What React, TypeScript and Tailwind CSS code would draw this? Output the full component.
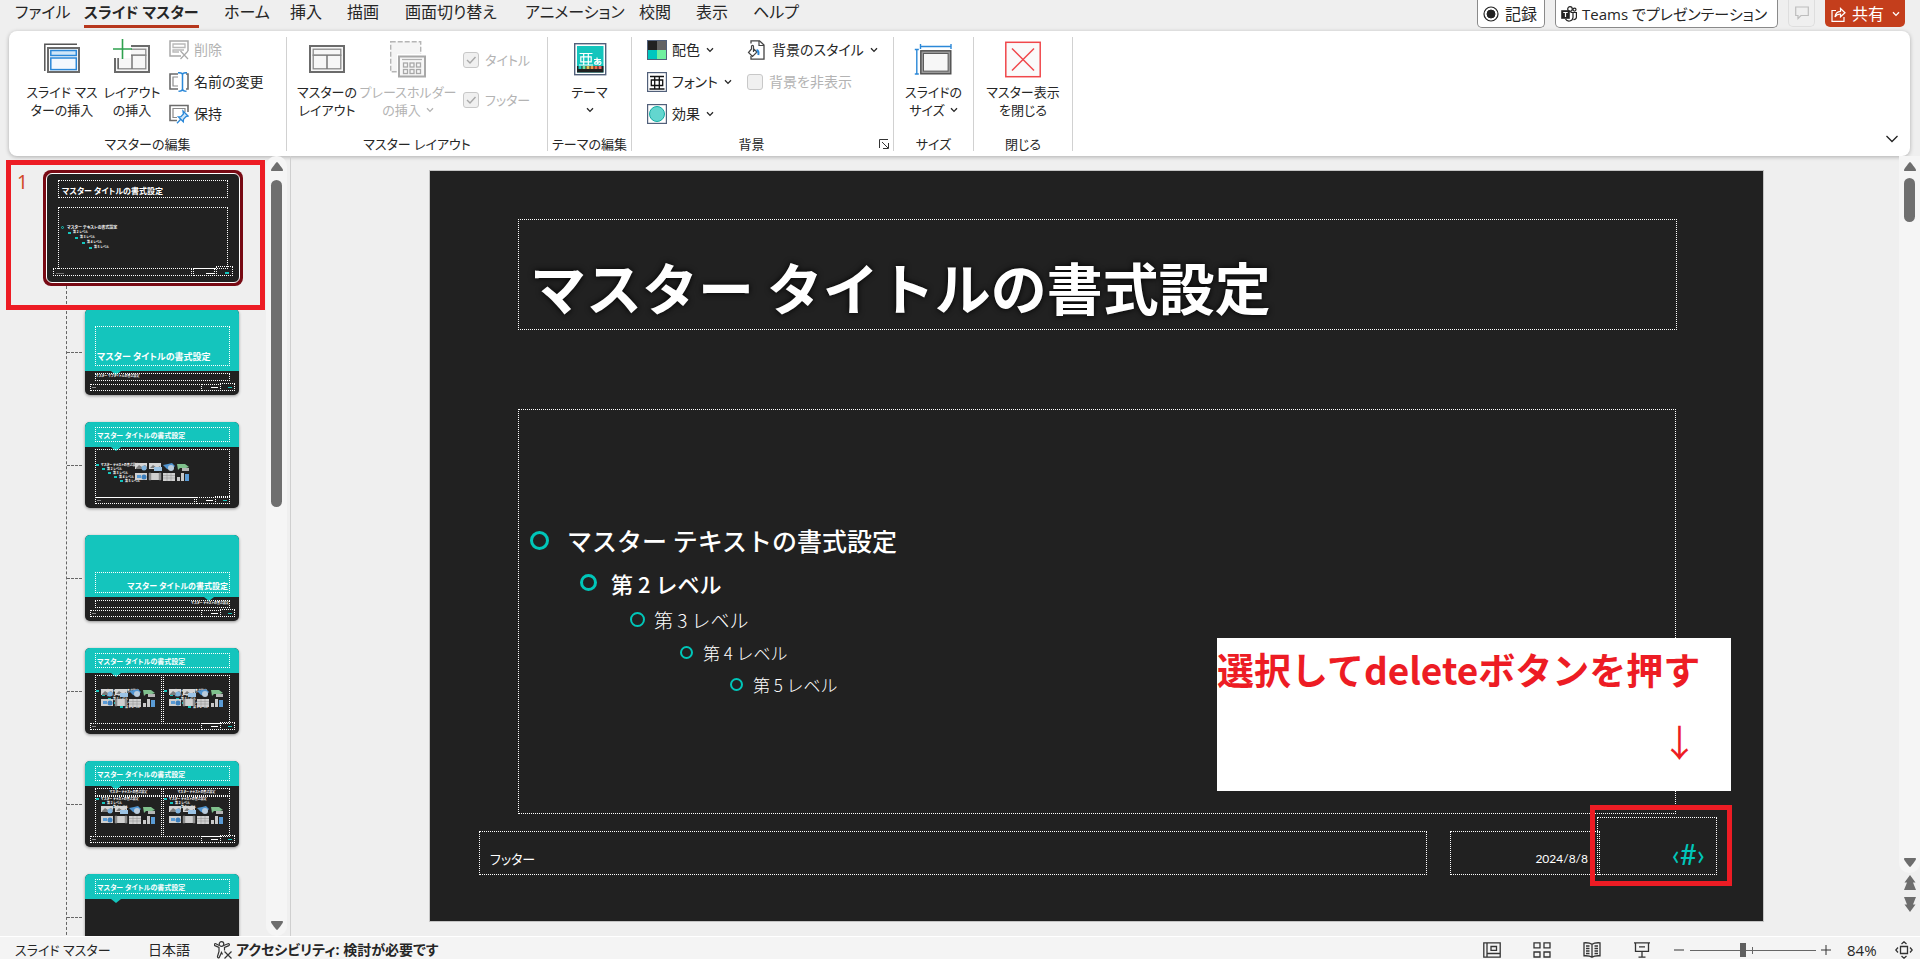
import React from "react";

type Kids = { children?: React.ReactNode };

const GREY = "#6b6b6b";
const BLUE = "#2b88d8";
const TEAL = "#14c5bd";

function Chevron({ className = "" }: { className?: string }) {
  return (
    <svg viewBox="0 0 8 6" className={"h-[6px] w-[8px] shrink-0 " + className} fill="none" stroke="currentColor" strokeWidth="1.3">
      <path d="M1 1.2 4 4.4 7 1.2" />
    </svg>
  );
}

/* ---------- Large ribbon icons (40 x 40) ---------- */

function Big({ children }: Kids) {
  return (
    <svg viewBox="0 0 40 40" className="h-10 w-10 shrink-0" fill="none">
      {children}
    </svg>
  );
}

function SlideMasterIcon() {
  return (
    <Big>
      <path d="M2.8 33V6.2H35" stroke="#555" strokeWidth="1.5" />
      <rect x="6" y="10" width="31" height="24" fill="#fafafa" stroke={GREY} strokeWidth="2" />
      <rect x="8.8" y="12.5" width="25.5" height="5" fill="#cfe6f8" stroke={BLUE} strokeWidth="1.5" />
      <rect x="8.8" y="20" width="25.5" height="11.6" fill="#f3f8fd" stroke={BLUE} strokeWidth="1.5" />
    </Big>
  );
}

function LayoutShape() {
  return (
    <>
      <rect x="3" y="8" width="34" height="26" fill="#f7f7f7" stroke={GREY} strokeWidth="2" />
      <rect x="6.2" y="11.2" width="27.6" height="6" stroke="#8a8a8a" strokeWidth="1.3" />
      <rect x="6.2" y="17.2" width="27.6" height="13.6" stroke="#8a8a8a" strokeWidth="1.3" />
      <path d="M20 17v14" stroke="#777" strokeWidth="1.5" />
    </>
  );
}

function InsertLayoutIcon() {
  return (
    <Big>
      <LayoutShape />
      <path d="M0 0h19v20H0z" fill="#fff" />
      <path d="M3 20v13M6.2 20v11" stroke={GREY} strokeWidth="1.5" />
      <path d="M10.5 1v20M1 11h19" stroke="#2fa14f" strokeWidth="1.6" />
    </Big>
  );
}

function MasterLayoutIcon() {
  return (
    <Big>
      <LayoutShape />
    </Big>
  );
}

function PlaceholderIcon() {
  return (
    <Big>
      <rect x="2.7" y="3.7" width="30" height="30" fill="#f5f5f5" stroke="#b5b5b5" strokeWidth="1.4" strokeDasharray="5 2" />
      <rect x="9" y="16" width="30" height="24" fill="#fff" />
      <rect x="11" y="18.5" width="26" height="20" fill="#f7f7f7" stroke="#a8a8a8" strokeWidth="2" />
      <path d="M14 21.5h20" stroke="#b0b0b0" strokeWidth="1.2" />
      {[15.5, 22, 28.5].map((x) => (
        <g key={x} stroke="#a8a8a8" strokeWidth="1.3">
          <rect x={x} y="25" width="4" height="4" />
          <rect x={x} y="31.5" width="4" height="4" />
        </g>
      ))}
    </Big>
  );
}

function ThemeIcon() {
  const swatches = ["#1bc8c0", "#70e8a0", "#e7c65a", "#f29a4a", "#ee6a4a", "#f0605e"];
  return (
    <Big>
      <rect x="4.7" y="5.7" width="31" height="31" fill="#fff" stroke="#51607a" strokeWidth="1.4" />
      <rect x="7" y="8" width="26.5" height="26.5" fill={TEAL} />
      <rect x="7" y="28" width="26.5" height="6.5" fill="#212121" />
      {swatches.map((c, i) => (
        <rect key={c} x={8.5 + i * 4} y="28" width="3" height="3" fill={c} />
      ))}
      <path d="M9.5 15.5h13M9 27h14M13.7 15.5V27M18.3 15.5V27M10.8 18.8h10.4v5H10.8z" stroke="#fff" strokeWidth="1.2" />
      <path d="M24 21.5h7M27 19.5c0 3 .2 5 .8 7M30 22.8c-1.2 3-5 4.5-5.3 2.5 0-2.5 6.5-3 6.3-.3-.1 1.2-1.2 1.7-2.5 1.8" stroke="#fff" strokeWidth="1.2" />
    </Big>
  );
}

function SlideSizeIcon() {
  return (
    <Big>
      <path d="M6.5 8.5H37M6.5 6v5M37 6v5M2.8 11.5V36M.8 11.5h4M.8 36h4" stroke={BLUE} strokeWidth="1.4" />
      <rect x="6.8" y="12.8" width="30" height="23" fill="#9a9a9a" stroke="#4e4e4e" strokeWidth="1.4" />
      <rect x="9.5" y="15.5" width="24.6" height="17.6" fill="#f7f7f7" stroke="#5c5c5c" />
    </Big>
  );
}

function CloseMasterIcon() {
  return (
    <Big>
      <rect x="2.8" y="4.3" width="34.4" height="34.4" fill="#fafafa" stroke="#f0474b" strokeWidth="1.5" />
      <path d="M9 10.5 31 32.5M31 10.5 9 32.5" stroke="#f0474b" strokeWidth="1.5" />
    </Big>
  );
}

/* ---------- Small ribbon icons (20 x 20) ---------- */

function Small({ children }: Kids) {
  return (
    <svg viewBox="0 0 20 20" className="h-5 w-5 shrink-0" fill="none">
      {children}
    </svg>
  );
}

function DeleteIcon() {
  return (
    <Small>
      <path d="M12 16H1V1h18v10" stroke="#a9a9a9" strokeWidth="1.5" />
      <path d="M4 4h12v3.5H4zM10 12H4v-2h11" stroke="#b9b9b9" strokeWidth="1.3" />
      <path d="m11.5 11 7.500 8M19 11l-7.500 8" stroke="#a9a9a9" strokeWidth="1.2" />
    </Small>
  );
}

function RenameIcon() {
  return (
    <Small>
      <path d="M9 2H1v15h8" stroke={GREY} strokeWidth="1.6" />
      <path d="M9 5H4v9h5" stroke="#8a8a8a" strokeWidth="1.2" />
      <path d="M17 2h2v15h-2" stroke={GREY} strokeWidth="1.6" />
      <path d="M9 .7c3 0 4.500.3 4.500 2v14c0 1.700-1.500 2.500-4 2.500M18 .7c-3 0-4.500.3-4.500 2v14c0 1.700 1.500 2.500 4 2.500" stroke={BLUE} strokeWidth="1.5" />
    </Small>
  );
}

function PreserveIcon() {
  return (
    <Small>
      <path d="M8 16.500H1v-15h18V8" stroke={GREY} strokeWidth="1.6" />
      <path d="M8 13.500H4v-9h12V8" stroke="#8a8a8a" strokeWidth="1.2" />
      <path d="m14 7 5 5-2 .6-2.500 2.600-.2 2.600-5-5 2.600-.2 2.500-2.600L14 7ZM11.500 15.500 8 19.300" fill="#cfe6f8" stroke={BLUE} strokeWidth="1.3" />
    </Small>
  );
}

function ColorsIcon() {
  return (
    <Small>
      <path d="M0 0h10v10H0z" fill="#212121" />
      <path d="M10 0h10v10H10z" fill="#636363" />
      <path d="M0 10h10v10H0z" fill="#00c6bf" />
      <path d="M10 10h10v10H10z" fill="#70ef9f" />
      <rect x=".5" y=".5" width="19" height="19" stroke="#51607a" />
    </Small>
  );
}

function FontsIcon() {
  return (
    <Small>
      <rect x=".6" y=".6" width="18.8" height="18.8" fill="#fff" stroke="#51607a" strokeWidth="1.2" />
      <path d="M3 4.500h14M2.500 17h15M7.700 4.500V17M12.300 4.500V17M4.300 8h11.400v5.500H4.300z" stroke="#111" strokeWidth="1.3" />
    </Small>
  );
}

function EffectsIcon() {
  return (
    <Small>
      <rect x=".6" y=".6" width="18.8" height="18.8" fill="#fff" stroke="#51607a" strokeWidth="1.2" />
      <circle cx="10" cy="10" r="7.5" fill="#63d6cf" stroke="#14aaa3" />
    </Small>
  );
}

function BackgroundStyleIcon() {
  return (
    <Small>
      <path d="M4 3.500V.8h8.500L17 5v14.200H4V16" fill="#fff" stroke="#444" strokeWidth="1.300" />
      <path d="M12 1v4.500h5" stroke="#444" strokeWidth="1.200" />
      <path d="M6.500 12V6.500c0-1.500-2-1.500-2 0V9L1.500 12.500l4 4 4.500-4.500-3.500-3.300" fill="#fff" stroke="#444" strokeWidth="1.200" />
      <path d="M9.500 10c2 .6 2.300 2.500 1.800 5" stroke={BLUE} strokeWidth="2" />
    </Small>
  );
}

/* ---------- Ribbon parts ---------- */

function Group({ label, className, launcher, children }: Kids & { label: string; className: string; launcher?: boolean }) {
  return (
    <section className={"flex shrink-0 flex-col border-r border-[#d1d1d1] " + className}>
      <div className="flex flex-1">{children}</div>
      <div className="flex h-[14px] items-center justify-center">
        <h2 className="flex-1 text-center text-[13px] leading-[14px] whitespace-nowrap">{label}</h2>
        {launcher && (
          <button aria-label="背景の書式設定" className="w-[22px] pl-2">
            <svg viewBox="0 0 10 10" className="h-[10px] w-[10px]" fill="none" stroke="#333">
              <path d="M.5 9V.5H9M3 3l6 6M9.500 4v5.500H4" />
            </svg>
          </button>
        )}
      </div>
    </section>
  );
}

function BigButton({ icon, lines, chevron, disabled, className }: { icon: React.ReactNode; lines: string[]; chevron?: boolean; disabled?: boolean; className: string }) {
  return (
    <button disabled={disabled} className={"flex shrink-0 flex-col items-center gap-[5px] self-start pt-px disabled:text-[#b3b3b3] " + className}>
      {icon}
      <span className="flex flex-col items-center text-[13px] leading-[18px] whitespace-nowrap">
        {lines.map((l, i) => (
          <span key={i} className="flex h-[18px] items-center gap-[5px]">
            {l}
            {chevron && i === lines.length - 1 && <Chevron />}
          </span>
        ))}
      </span>
    </button>
  );
}

function SmallButton({ icon, label, chevron, disabled }: { icon: React.ReactNode; label: string; chevron?: boolean; disabled?: boolean }) {
  return (
    <button disabled={disabled} className="flex h-8 items-center gap-[5px] text-[14px] leading-5 whitespace-nowrap disabled:text-[#b3b3b3]">
      {icon}
      {label}
      {chevron && <Chevron className="ml-px" />}
    </button>
  );
}

function Check({ label, checked, className = "" }: { label: string; checked?: boolean; className?: string }) {
  return (
    <label className={"flex items-center gap-[6px] leading-5 whitespace-nowrap text-[#b3b3b3] " + className}>
      <span className="grid">
        <input type="checkbox" disabled defaultChecked={checked} className="col-start-1 row-start-1 h-4 w-4 appearance-none rounded-[3px] border border-[#c8c8c8] bg-[#f0f0f0]" />
        {checked && (
          <svg viewBox="0 0 16 16" className="col-start-1 row-start-1 h-4 w-4" fill="none" stroke="#a8a8a8" strokeWidth="1.4">
            <path d="m4 8 3 3 5.500-6" />
          </svg>
        )}
      </span>
      {label}
    </label>
  );
}

const tabs: { label: string; width: string; active?: boolean }[] = [
  { label: "ファイル", width: "w-[69px]" },
  { label: "スライド マスター", width: "w-[140px]", active: true },
  { label: "ホーム", width: "w-[66px]" },
  { label: "挿入", width: "w-[57px]" },
  { label: "描画", width: "w-[58px]" },
  { label: "画面切り替え", width: "w-[120px]" },
  { label: "アニメーション", width: "w-[114px]" },
  { label: "校閲", width: "w-[57px]" },
  { label: "表示", width: "w-[57px]" },
  { label: "ヘルプ", width: "w-[60px]" },
];

function TopBar() {
  const outlined = "flex h-7 items-center rounded-b-[5px] border border-t-0 border-[#8a8a8a] bg-white whitespace-nowrap";
  return (
    <header className="flex h-[31px] justify-between pr-[15px] pl-[15px] text-[16px] leading-6">
      <nav className="flex">
        {tabs.map((t) => (
          <div key={t.label} className={"shrink-0 " + t.width}>
            <button className={"flex h-[28px] flex-col whitespace-nowrap " + (t.active ? "border-b-[3px] border-[#b7371d] text-[15px] font-bold" : "")}>
              {t.label}
            </button>
          </div>
        ))}
      </nav>
      <div className="flex h-[27px]">
        <button className={outlined + " mr-[10px] w-[68px] gap-[6px] pl-[5px]"}>
          <svg viewBox="0 0 16 16" className="h-4 w-4" fill="none" stroke="#222">
            <circle cx="8" cy="8" r="7" strokeWidth="1.2" />
            <circle cx="8" cy="8" r="4" fill="#222" />
          </svg>
          記録
        </button>
        <button className={outlined + " mr-[10px] w-[223px] gap-[5px] pl-[5px] text-[15px]"}>
          <svg viewBox="0 0 16 16" className="h-4 w-4 shrink-0" fill="none" stroke="#222" strokeWidth="1.2">
            <circle cx="9" cy="3" r="2.3" />
            <circle cx="13.5" cy="3.6" r="1.5" />
            <path d="M9.500 6.500H15.400v4.500a2.500 2.500 0 0 1-3 2.500M12 6.500v5a4 4 0 0 1-7.500 1.500" />
            <path d="M.2 4.200h8.600v8.600H.2z" fill="#222" stroke="none" />
            <path d="M2.300 6.500h4.400M4.500 6.500v4.500" stroke="#fff" />
          </svg>
          Teams でプレゼンテーション
        </button>
        <button aria-label="コメント" className="mr-[10px] flex w-[27px] items-center justify-center rounded-b-[5px] border border-t-0 border-[#dedede]">
          <svg viewBox="0 0 14 14" className="h-[14px] w-[14px]" fill="none" stroke="#bdbdbd" strokeWidth="1.2">
            <path d="M.7 1h12.600v8.500H6l-3 3v-3H.7z" />
          </svg>
        </button>
        <button className="flex w-20 items-center gap-[6px] rounded-b-[5px] bg-[#c43e1c] pl-[6px] whitespace-nowrap text-white">
          <svg viewBox="0 0 15 16" className="h-4 w-[15px]" fill="none" stroke="#fff" strokeWidth="1.2">
            <path d="M5 4.500H1v10.800h12V11" />
            <path d="M4 11c.4-4 2.500-5.500 5.500-5.700V2.500L14 6.800l-4.500 4V8C7 8 5.500 8.500 4 11Z" />
          </svg>
          共有
          <Chevron className="ml-[2px]" />
        </button>
      </div>
    </header>
  );
}

function Ribbon() {
  return (
    <div className="mr-[10px] ml-[9px] flex h-[125px] shrink-0 rounded-lg bg-white pt-[6px] pb-[5px] shadow-[0_1px_4px_rgba(0,0,0,0.28)]">
      <Group label="マスターの編集" className="w-[278px]">
        <BigButton className="ml-[18px] w-[70px]" icon={<SlideMasterIcon />} lines={["スライド マス", "ターの挿入"]} />
        <BigButton className="w-[70px]" icon={<InsertLayoutIcon />} lines={["レイアウト", "の挿入"]} />
        <div className="-mt-[3px] ml-[2px] flex flex-col">
          <SmallButton icon={<DeleteIcon />} label="削除" disabled />
          <SmallButton icon={<RenameIcon />} label="名前の変更" />
          <SmallButton icon={<PreserveIcon />} label="保持" />
        </div>
      </Group>
      <Group label="マスター レイアウト" className="w-[261px]">
        <BigButton className="ml-[6px] w-[68px]" icon={<MasterLayoutIcon />} lines={["マスターの", "レイアウト"]} />
        <BigButton className="w-[94px]" icon={<PlaceholderIcon />} lines={["プレースホルダー", "の挿入"]} chevron disabled />
        <div className="ml-[8px] flex flex-col gap-5 pt-[13px] text-[13px]">
          <Check label="タイトル" checked />
          <Check label="フッター" checked />
        </div>
      </Group>
      <Group label="テーマの編集" className="w-[84px]">
        <BigButton className="w-full" icon={<ThemeIcon />} lines={["テーマ", ""]} chevron />
      </Group>
      <Group label="背景" className="w-[262px]" launcher>
        <div className="-mt-[3px] ml-[15px] flex w-[100px] flex-col">
          <SmallButton icon={<ColorsIcon />} label="配色" chevron />
          <SmallButton icon={<FontsIcon />} label="フォント" chevron />
          <SmallButton icon={<EffectsIcon />} label="効果" chevron />
        </div>
        <div className="-mt-[3px] flex flex-col text-[14px]">
          <SmallButton icon={<BackgroundStyleIcon />} label="背景のスタイル" chevron />
          <Check label="背景を非表示" className="h-8" />
        </div>
      </Group>
      <Group label="サイズ" className="w-[80px]">
        <BigButton className="w-full" icon={<SlideSizeIcon />} lines={["スライドの", "サイズ"]} chevron />
      </Group>
      <Group label="閉じる" className="w-[99px]">
        <BigButton className="w-full" icon={<CloseMasterIcon />} lines={["マスター表示", "を閉じる"]} />
      </Group>
      <button aria-label="リボンの表示オプション" className="mr-3 mb-[8px] ml-auto self-end">
        <svg viewBox="0 0 12 8" className="h-2 w-3" fill="none" stroke="#222" strokeWidth="1.3">
          <path d="m.5 1 5.500 5.500L11.500 1" />
        </svg>
      </button>
    </div>
  );
}

/* ---------- Thumbnails ---------- */

function Box({ className, children }: Kids & { className: string }) {
  return <div className={"absolute border border-dotted border-white " + className}>{children}</div>;
}

function MiniIcons({ className }: { className: string }) {
  return (
    <svg viewBox="0 0 54 18" className={"absolute h-[18px] w-[54px] " + className}>
      <path d="M0 0h12v6H0zM14 0h12v6H14z" fill="#d5d5d5" />
      <path d="m1 5 3-3 3 2 3-2 2 2v2H1zM15 5l3-3 4 3 3-2v2z" fill="#7d7d7d" />
      <circle cx="9" cy="5" r="2.5" fill="#7fb2dc" />
      <path d="M19 4h8v4h-8z" fill="#9cc4e6" />
      <path d="m28 2 5-1 4-1 3 3-4 4-4-1z" fill="#4f93cf" />
      <circle cx="36" cy="5" r="3" fill="#b9cbdb" />
      <path d="M42 1h8l4 3-3 1h-6l-2 2z" fill="#7fc08c" />
      <path d="M47 5h7v3h-7z" fill="#b5b5b5" />
      <path d="M0 10h12v7H0zM14 10h12v7H14zM28 10h12v8H28z" fill="#cfcfcf" />
      <path d="M2 12h4v3H2z" fill="#5a9bd5" />
      <circle cx="9" cy="14" r="2.5" fill="#3d7fbd" />
      <path d="M14 10h2v7h-2zM24 10h2v7h-2zM28 12.500h12M28 15h12M32 10v8M36 10v8" fill="#8d8d8d" stroke="#8d8d8d" strokeWidth=".5" />
      <path d="M42 14h3v4h-3zM46 10h3v8h-3z" fill="#c9c9c9" />
      <path d="M50 11h4v7h-4z" fill="#5a9bd5" />
    </svg>
  );
}

const levelIndent = ["pl-0", "pl-[6px]", "pl-[12px]", "pl-[18px]", "pl-[24px]"];

function MiniLevels({ count = 5, className = "" }: { count?: number; className?: string }) {
  return (
    <div className={"text-[3px] leading-[4px] font-bold whitespace-nowrap text-white " + className}>
      {levelIndent.slice(0, count).map((p, i) => (
        <div key={p} className={"flex items-center gap-[2px] " + p}>
          <i className="h-[2px] w-[3px] bg-[#14c5bd]" />
          {i === 0 ? "マスター テキストの書式設定" : "第 " + (i + 1) + " レベル"}
        </div>
      ))}
    </div>
  );
}

function MiniFooter({ narrow }: { narrow?: boolean }) {
  return (
    <>
      <Box className={"top-[75px] h-[7px] " + (narrow ? "left-[10px] w-[100px]" : "left-[5px] w-[112px]")}>
        <i className="absolute top-[2px] left-px h-px w-1 bg-[#8d8d8d]" />
      </Box>
      <Box className={"top-[75px] h-[7px] " + (narrow ? "left-[111px] w-[20px]" : "left-[116px] w-[20px]")}>
        <i className="absolute top-[2px] right-[2px] h-px w-[7px] bg-white" />
      </Box>
      <Box className={"top-[74px] h-[8px] " + (narrow ? "left-[130px] w-[15px]" : "left-[135px] w-[15px]")}>
        <i className="absolute top-[3px] right-[2px] h-px w-1 bg-[#14c5bd]" />
      </Box>
    </>
  );
}

function Notch({ className }: { className: string }) {
  return (
    <svg viewBox="0 0 10 4" className={"absolute h-1 w-[10px] " + className}>
      <path d="M0 0h10L5 4z" fill={TEAL} />
    </svg>
  );
}

type Kind = "title" | "content" | "section" | "two" | "compare" | "plain";

function LayoutThumb({ kind }: { kind: Kind }) {
  const tall = kind === "title" || kind === "section";
  return (
    <button aria-label="レイアウト" className="relative h-[86px] w-[154px] shrink-0 overflow-hidden rounded-[5px] bg-[#212121] text-left shadow-[0_1px_3px_rgba(0,0,0,0.4)]">
      <div className={"absolute inset-x-0 top-0 bg-[#14c5bd] " + (tall ? "h-[62px]" : "h-[25px]")} />
      {kind === "title" && (
        <>
          <Box className="top-[17px] left-[10px] h-[40px] w-[135px]">
            <div className="absolute bottom-[2px] left-px text-[9px] leading-[12px] font-bold whitespace-nowrap text-white">マスター タイトルの書式設定</div>
          </Box>
          <Notch className="top-[62px] left-[26px]" />
          <Box className="top-[64px] left-[10px] h-[8px] w-[135px]">
            <div className="text-[3px] leading-[4px] font-bold whitespace-nowrap text-white">マスター サブタイトルの書式設定</div>
          </Box>
          <MiniFooter />
        </>
      )}
      {kind === "section" && (
        <>
          <Box className="top-[37px] left-[10px] h-[21px] w-[135px]">
            <div className="absolute right-px bottom-0 text-[8px] leading-[12px] font-bold whitespace-nowrap text-white">マスター タイトルの書式設定</div>
          </Box>
          <Notch className="top-[62px] left-[119px]" />
          <Box className="top-[65px] left-[10px] h-[8px] w-[135px]">
            <div className="text-right text-[3px] leading-[4px] font-bold whitespace-nowrap text-white">マスター テキストの書式設定</div>
          </Box>
          <MiniFooter />
        </>
      )}
      {!tall && (
        <>
          <Box className="top-[5px] left-[10px] h-[15px] w-[135px]">
            <div className="pl-px text-[7px] leading-[15px] font-bold whitespace-nowrap text-white">マスター タイトルの書式設定</div>
          </Box>
          <Notch className="top-[25px] left-[26px]" />
        </>
      )}
      {kind === "content" && (
        <>
          <Box className="top-[27px] left-[10px] h-[49px] w-[135px]">
            <MiniLevels className="pt-[13px]" />
          </Box>
          <MiniIcons className="top-[41px] left-[50px]" />
          <MiniFooter narrow />
        </>
      )}
      {kind === "two" && (
        <>
          <Box className="top-[27px] left-[10px] h-[49px] w-[67px]">
            <MiniLevels className="pt-[13px]" />
          </Box>
          <Box className="top-[27px] left-[78px] h-[49px] w-[67px]">
            <MiniLevels className="pt-[13px]" />
          </Box>
          <MiniIcons className="top-[41px] left-[16px]" />
          <MiniIcons className="top-[41px] left-[84px]" />
          <MiniFooter />
        </>
      )}
      {kind === "compare" && (
        <>
          {["left-[10px]", "left-[78px]"].map((x) => (
            <React.Fragment key={x}>
              <Box className={"top-[27px] h-[8px] w-[67px] " + x}>
                <div className="text-center text-[3px] leading-[6px] font-bold whitespace-nowrap text-white">マスター テキストの書式設定</div>
              </Box>
              <Box className={"top-[35px] h-[41px] w-[67px] " + x}>
                <MiniLevels count={3} />
              </Box>
            </React.Fragment>
          ))}
          <MiniIcons className="top-[45px] left-[16px]" />
          <MiniIcons className="top-[45px] left-[84px]" />
          <MiniFooter />
        </>
      )}
    </button>
  );
}

function MasterThumb() {
  return (
    <button aria-label="スライド マスター" className="ml-[17px] rounded-[8px] bg-[#780a14] p-[3px] text-left">
      <div className="relative h-[110px] w-[194px] overflow-hidden rounded-[6px] border border-white bg-[#212121]">
        <Box className="top-[6px] left-[11px] h-[18px] w-[170px]">
          <div className="pl-[3px] text-[8px] leading-[19px] font-bold whitespace-nowrap text-white">マスター タイトルの書式設定</div>
        </Box>
        <Box className="top-[33px] left-[11px] h-[62px] w-[170px]">
          <div className="pt-[17px] pl-[2px] text-[3px] leading-[5px] font-bold whitespace-nowrap text-white">
            <div className="flex items-center gap-[3px] text-[4px]">
              <i className="h-[3px] w-[3px] rounded-full border border-[#14c5bd]" />
              マスター テキストの書式設定
            </div>
            {["pl-[7px]", "pl-[14px]", "pl-[21px]", "pl-[28px]"].map((p, i) => (
              <div key={p} className={"flex items-center gap-[2px] " + p}>
                <i className="h-[2px] w-[3px] bg-[#14c5bd]" />
                {"第 " + (i + 2) + " レベル"}
              </div>
            ))}
          </div>
        </Box>
        <Box className="top-[94px] left-[6px] h-[8px] w-[139px]">
          <i className="absolute top-[4px] left-[2px] h-px w-2 bg-[#6f6f6f]" />
        </Box>
        <Box className="top-[94px] left-[146px] h-[8px] w-[22px]">
          <i className="absolute right-0 bottom-px h-px w-2 bg-white" />
        </Box>
        <Box className="top-[92px] left-[169px] h-[10px] w-[17px]">
          <i className="absolute right-[3px] bottom-px h-[2px] w-[4px] bg-[#14c5bd]" />
        </Box>
      </div>
    </button>
  );
}

function Triangle({ down, double }: { down?: boolean; double?: boolean }) {
  return (
    <svg viewBox={double ? "0 0 12 16" : "0 0 12 9"} className={(double ? "h-4 w-3" : "h-[9px] w-3") + (down ? " rotate-180" : "")} fill="#6d6d6d">
      {double ? <path d="M6 0l5.500 7.500H9L12 15H0l3-7.500H.5z" /> : <path d="M6 0c.6 0 6 7 6 8s-.5 1-1 1H1c-.5 0-1 0-1-1s5.400-8 6-8Z" />}
    </svg>
  );
}

const layouts: Kind[] = ["title", "content", "section", "two", "compare", "plain"];

function ThumbPane() {
  return (
    <aside className="relative flex w-[291px] shrink-0 overflow-hidden border-r border-[#cfcfcf]">
      <div className="flex-1 overflow-hidden">
        <div className="flex pt-[14px] pl-[17px]">
          <span className="w-[9px] font-['Noto_Sans'] text-[19px] leading-6 text-[#d24726]">1</span>
          <MasterThumb />
        </div>
        <ul className="ml-[66px] flex flex-col gap-[27px] border-l border-dashed border-[#666] pt-[23px]">
          {layouts.map((k) => (
            <li key={k} className="flex items-center gap-[3px]">
              <span className="w-[15px] border-t border-dashed border-[#666]" />
              <LayoutThumb kind={k} />
            </li>
          ))}
        </ul>
      </div>
      <div className="mr-[3px] flex w-[21px] flex-col items-center rounded-[10px] bg-[#f5f5f5] pt-[6px] pb-[6px]">
        <Triangle />
        <span className="mt-[9px] h-[327px] w-[11px] rounded-full bg-[#6f6f6f]" />
        <span className="flex-1" />
        <Triangle down />
      </div>
      <div className="absolute top-[4px] left-[6px] h-[150px] w-[259px] border-[5px] border-[#ed1c24]" />
    </aside>
  );
}

/* ---------- Slide ---------- */

const levels = [
  { text: "マスター テキストの書式設定", row: "h-9 gap-[18px] pl-[11px] text-[25px] font-medium", dot: "h-[19px] w-[19px] border-[3px]" },
  { text: "第 2 レベル", row: "h-8 gap-[14px] pl-[61px] text-[22px] font-medium", dot: "h-[17px] w-[17px] border-[3px]" },
  { text: "第 3 レベル", row: "h-[26px] gap-[9px] pl-[111px] text-[19px] font-light", dot: "h-[15px] w-[15px] border-2" },
  { text: "第 4 レベル", row: "h-6 gap-[10px] pl-[161px] text-[17px] font-light", dot: "h-[13px] w-[13px] border-2" },
  { text: "第 5 レベル", row: "h-6 gap-[10px] pl-[211px] text-[17px] font-light", dot: "h-[13px] w-[13px] border-2" },
];

function Slide() {
  return (
    <div className="relative aspect-[1333/750] w-full bg-[#212121] text-white shadow-[0_0_0_1px_#c4c4c4]">
      <Box className="top-[48px] right-[86px] left-[88px] flex h-[111px] items-end pb-[6px] pl-[11px]">
        <h1 className="font-['Noto_Sans_CJK_JP',sans-serif] text-[56px] leading-[74px] font-bold whitespace-nowrap [font-feature-settings:normal] [text-shadow:0_0_6px_#000]">マスター タイトルの書式設定</h1>
      </Box>
      <Box className="top-[238px] right-[87px] bottom-[107px] left-[88px] flex flex-col justify-center pb-1">
        <ul className="flex flex-col gap-2 font-['Noto_Sans_CJK_JP',sans-serif] leading-none [font-feature-settings:normal]">
          {levels.map((l) => (
            <li key={l.text} className={"flex items-center whitespace-nowrap " + l.row}>
              <span className={"rounded-full border-[#00c6b9] " + l.dot} />
              {l.text}
            </li>
          ))}
        </ul>
      </Box>
      <Box className="right-[336px] bottom-[46px] left-[49px] flex h-[44px] items-end pb-[7px] pl-[10px] text-[13px] leading-4">フッター</Box>
      <Box className="right-[163px] bottom-[46px] flex h-[44px] w-[150px] items-end justify-end pr-[11px] pb-[7px] font-['Lato',sans-serif] text-[12px] leading-4">2024/8/8</Box>
      <Box className="right-[46px] bottom-[46px] flex h-[58px] w-[120px] items-end justify-end pr-[11px] pb-[8px] font-['Lato',sans-serif] text-[29px] leading-6 text-[#00c6b9]">‹#›</Box>
      <div className="absolute right-[32px] bottom-[130px] flex h-[153px] w-[514px] flex-col bg-white font-['Noto_Sans_CJK_JP',sans-serif] text-[37px] text-[#ed1c24] [font-feature-settings:normal]">
        <p className="pt-[4px] leading-[54px] font-bold whitespace-nowrap">選択してdeleteボタンを押す</p>
        <p className="self-end pt-[18px] pr-[33px] leading-[54px]">↓</p>
      </div>
      <div className="absolute right-[31px] bottom-[35px] h-[81px] w-[142px] border-[5px] border-[#ed1c24]" />
    </div>
  );
}

/* ---------- Status bar ---------- */

function StatusIcon({ label, children }: Kids & { label: string }) {
  return (
    <button aria-label={label} className="mr-8">
      <svg viewBox="0 0 18 16" className="h-4 w-[18px]" fill="none" stroke="#333" strokeWidth="1.3">
        {children}
      </svg>
    </button>
  );
}

function StatusBar() {
  return (
    <footer className="flex h-[23px] shrink-0 items-center border-t border-white bg-[#f4f4f4] pt-[4px] pr-[7px] pl-[15px] text-[14px] leading-[18px]">
      <span className="w-[133px] text-[13px] whitespace-nowrap">スライド マスター</span>
      <button className="w-[66px] text-left whitespace-nowrap">日本語</button>
      <button className="flex items-center gap-[4px] font-bold whitespace-nowrap">
        <svg viewBox="0 0 18 18" className="h-[18px] w-[18px]" fill="none" stroke="#333" strokeWidth="1.2">
          <circle cx="7.5" cy="3" r="2.3" />
          <path d="M9.700 4.500 14 2.800c1.500-.4 1.800 1.300.8 1.800L10.500 6.500v3M5.300 4.500 1.800 2.800C.3 2.200-.2 4 .9 4.600L5 6.500v4l-1.500 5c-.2 1.500 1.500 1.900 2 .6l2-4.600 1 2" />
          <path d="m10.500 10.500 7 7M17.500 10.500l-7 7" />
        </svg>
        アクセシビリティ: 検討が必要です
      </button>
      <span className="flex-1" />
      <StatusIcon label="標準">
        <path d="M.8.8h16.400v14.400H.8zM4 .8v14.400M4 11.500h13.200M8 4.500h5.500v3.800H8z" />
      </StatusIcon>
      <StatusIcon label="スライド一覧">
        <path d="M1 .8h6v5H1zM11 .8h6v5h-6zM1 10h6v5H1zM11 10h6v5h-6z" />
      </StatusIcon>
      <StatusIcon label="閲覧表示">
        <path d="M9 2.200C7 .8 4 .6 1 .8v13c3-.2 6 0 8 1.400 2-1.400 5-1.600 8-1.400V.8c-3-.2-6 0-8 1.400zM9 2v13M3 4h3.500M3 6.500h3.500M3 9h3.500M3 11.500h3.500M11.500 4H15M11.500 6.500H15M11.500 9H15M11.500 11.500H15" />
      </StatusIcon>
      <button aria-label="スライドショー" className="mr-[23px]">
        <svg viewBox="0 0 18 16" className="h-4 w-[18px]" fill="none" stroke="#333" strokeWidth="1.3">
          <path d="M1 .8h16M2.500.8v8.500h13V.8M6 4.800h6M9 9.300V15M5.500 15.200h7" />
        </svg>
      </button>
      <button aria-label="縮小" className="mr-[6px]">
        <svg viewBox="0 0 10 10" className="h-[10px] w-[10px]" stroke="#333">
          <path d="M0 5h10" />
        </svg>
      </button>
      <input
        type="range"
        aria-label="ズーム"
        min={0}
        max={100}
        defaultValue={42}
        className="h-4 w-[126px] appearance-none bg-[linear-gradient(#666,#666),linear-gradient(#666,#666)] bg-[length:100%_1px,1px_7px] bg-[position:0_8px,62px_5px] bg-no-repeat [&::-webkit-slider-thumb]:h-[14px] [&::-webkit-slider-thumb]:w-[6px] [&::-webkit-slider-thumb]:appearance-none [&::-webkit-slider-thumb]:bg-[#5f5f5f]"
      />
      <button aria-label="拡大" className="mr-4 ml-[5px]">
        <svg viewBox="0 0 10 10" className="h-[10px] w-[10px]" stroke="#333">
          <path d="M0 5h10M5 0v10" />
        </svg>
      </button>
      <button className="w-[48px] text-left text-[15px] leading-4">84%</button>
      <button aria-label="ウィンドウに合わせる">
        <svg viewBox="0 0 18 18" className="h-[18px] w-[18px]" fill="none" stroke="#333" strokeWidth="1.3">
          <path d="M5.500 5.500h7v7h-7zM6.500 3 9 .8 11.500 3M6.500 15 9 17.200l2.500-2.200M3 6.500.8 9 3 11.500M15 6.500 17.200 9 15 11.500" />
        </svg>
      </button>
    </footer>
  );
}

export default function App() {
  return (
    <div className="flex h-screen flex-col overflow-hidden bg-[#efefef] font-['Open_Sans','Noto_Sans_CJK_JP',sans-serif] text-[#262626] [font-feature-settings:'palt']">
      <TopBar />
      <Ribbon />
      <div className="flex min-h-0 flex-1">
        <ThumbPane />
        <main className="min-w-0 flex-1 overflow-hidden pt-[15px] pr-[136px] pl-[139px]">
          <Slide />
        </main>
        <div className="flex w-[21px] flex-col pb-[24px]">
          <div className="flex flex-1 flex-col items-center rounded-b-[10px] bg-[#f5f5f5] pt-[6px] pb-[6px]">
            <Triangle />
            <span className="mt-[7px] h-[44px] w-[11px] rounded-full bg-[#6f6f6f]" />
            <span className="flex-1" />
            <Triangle down />
          </div>
          <div className="flex flex-col items-center gap-[5px] pt-[2px]">
            <Triangle double />
            <Triangle double down />
          </div>
        </div>
      </div>
      <StatusBar />
    </div>
  );
}
